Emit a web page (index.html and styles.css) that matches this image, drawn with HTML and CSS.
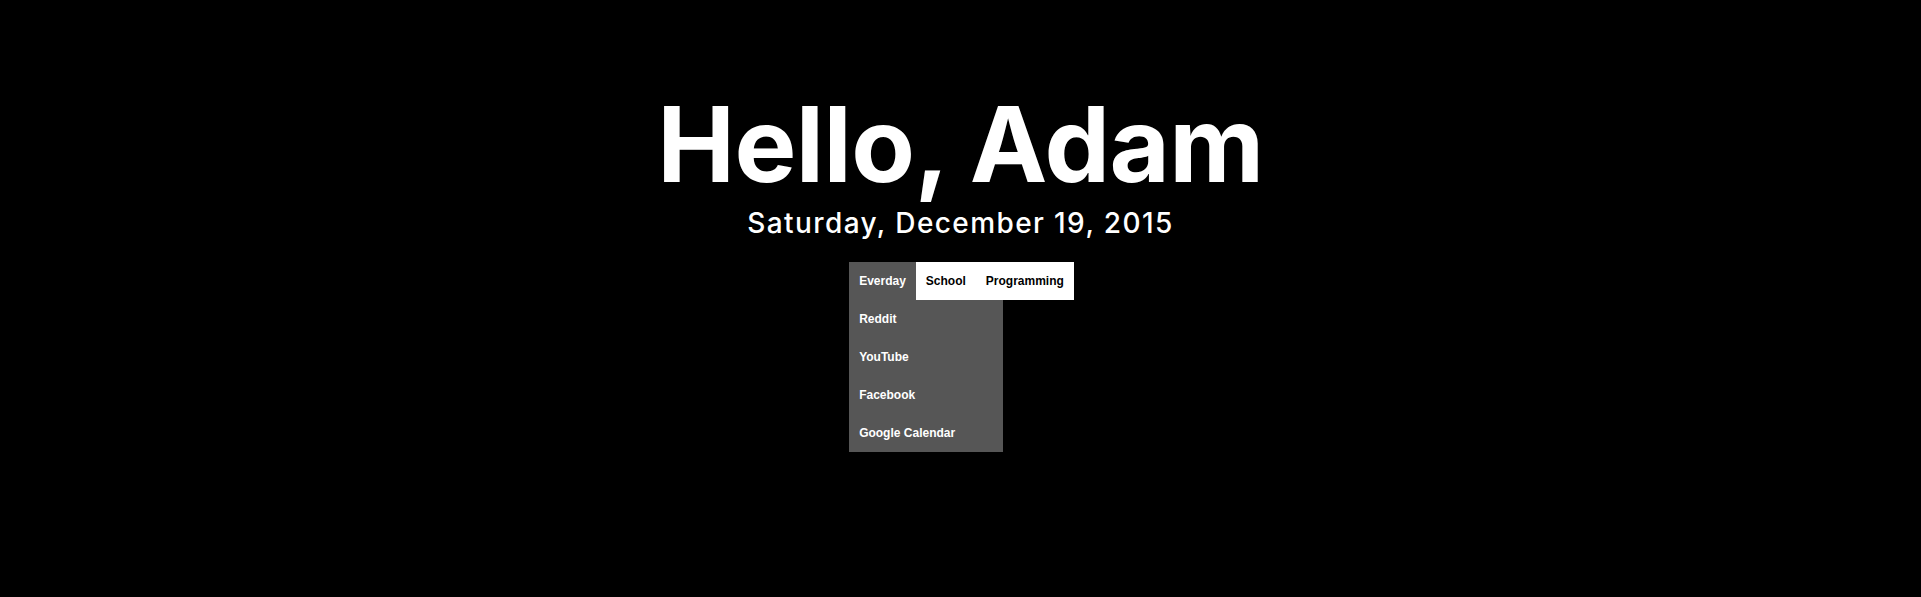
FILE: index.html
```html
<!DOCTYPE html>
<html lang="en">
<head>
<meta charset="utf-8">
<title>Hello, Adam</title>
<link rel="stylesheet" href="styles.css">
</head>
<body>
<main class="page">
  <h1 class="hello">Hello, Adam</h1>
  <p class="date">Saturday, December 19, 2015</p>
  <nav class="menu">
    <div class="tab tab-active">
      <span class="tab-label">Everday</span>
      <ul class="dropdown">
        <li>Reddit</li>
        <li>YouTube</li>
        <li>Facebook</li>
        <li>Google Calendar</li>
      </ul>
    </div>
    <div class="tab"><span class="tab-label">School</span></div>
    <div class="tab"><span class="tab-label">Programming</span></div>
  </nav>
</main>
</body>
</html>
```
FILE: styles.css
```css
html, body {
  margin: 0;
  padding: 0;
  background: #000;
}
.page {
  display: flex;
  flex-direction: column;
  align-items: center;
  padding-top: 92px;
  min-height: 597px;
  box-sizing: border-box;
}
.hello {
  margin: 0;
  font-family: Inter, "Open Sans", sans-serif;
  font-weight: 700;
  font-size: 104px;
  line-height: 104px;
  color: #fff;
  letter-spacing: -0.5px;
}
.date {
  margin: 9px 0 0;
  font-family: Inter, "Open Sans", sans-serif;
  font-weight: 500;
  font-size: 28px;
  line-height: 36px;
  letter-spacing: 1.4px;
  color: #fff;
}
.menu {
  display: flex;
  margin-top: 21px;
  margin-left: 2px;
  background: #fff;
  font-family: "Liberation Sans", Arial, sans-serif;
  font-weight: 700;
  font-size: 12px;
}
.tab {
  position: relative;
  padding: 0 10px;
  line-height: 38px;
  height: 38px;
  color: #000;
}
.tab-active {
  background: #565656;
  color: #fff;
}
.dropdown {
  position: absolute;
  left: 0;
  top: 38px;
  width: 154px;
  margin: 0;
  padding: 0;
  list-style: none;
  background: #565656;
  text-align: left;
}
.dropdown li {
  padding: 0 10px;
  height: 38px;
  line-height: 38px;
  color: #fff;
}
```
